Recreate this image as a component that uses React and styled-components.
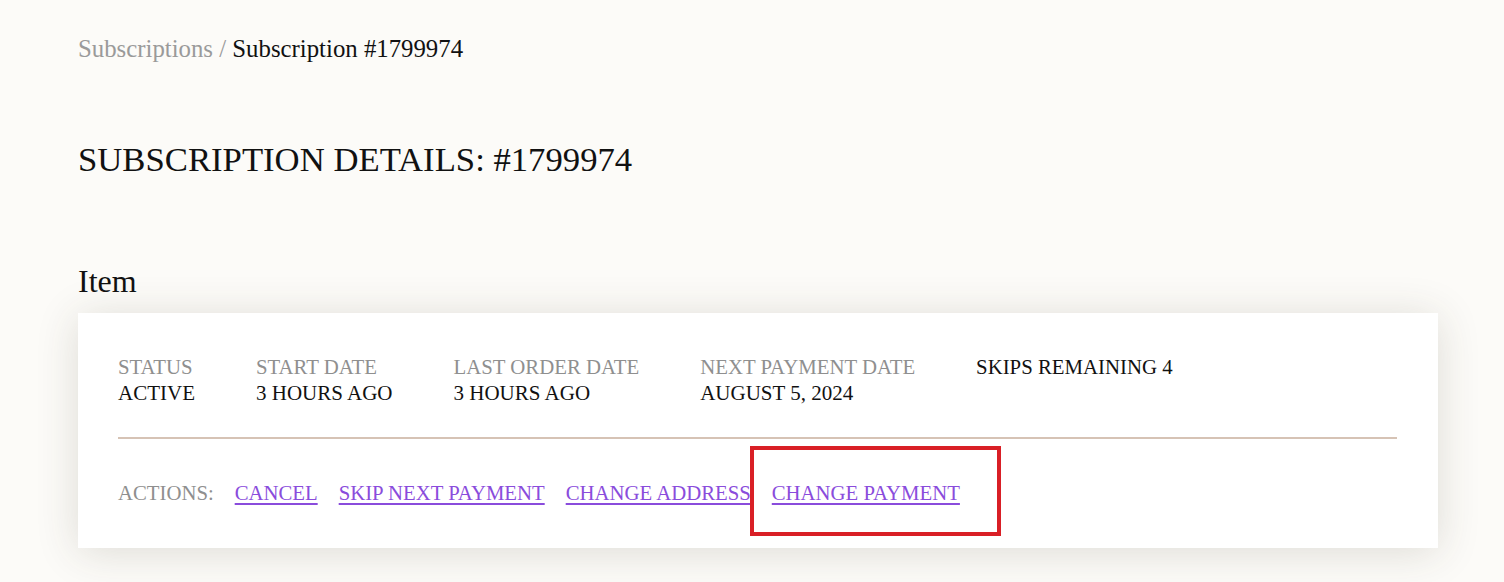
import React from "react";
import styled, { createGlobalStyle } from "styled-components";

const GlobalStyle = createGlobalStyle`
  html, body {
    margin: 0;
    padding: 0;
    background: #fcfbf8;
  }
  body {
    font-family: "Liberation Serif", "Times New Roman", serif;
    color: #111;
  }
`;

const Page = styled.div`
  padding: 34px 66px 40px 78px;
`;

const Breadcrumb = styled.nav`
  font-size: 24.8px;
  line-height: 30px;
  color: #111;
`;

const Crumb = styled.span`
  color: ${(p) => (p.$muted ? "#9a9a9a" : "#111")};
`;

const Title = styled.h1`
  margin: 74px 0 0;
  font-size: 34.7px;
  line-height: 44px;
  font-weight: normal;
  text-transform: uppercase;
`;

const SectionTitle = styled.h2`
  margin: 79px 0 12px;
  font-size: 32px;
  line-height: 40px;
  font-weight: normal;
`;

const Card = styled.section`
  background: #fff;
  padding: 40px 41px 41px 40px;
  box-shadow: 0 4px 40px rgba(60, 55, 40, 0.16);
`;

const Stats = styled.dl`
  display: flex;
  gap: 61px;
  margin: 0;
`;

const Stat = styled.div`
  display: flex;
  flex-direction: column;
`;

const Label = styled.dt`
  font-size: 20.8px;
  line-height: 27px;
  text-transform: uppercase;
  color: ${(p) => (p.$dark ? "#111" : "#8f8f8f")};
`;

const Value = styled.dd`
  margin: 0;
  font-size: 21px;
  line-height: 27px;
  text-transform: uppercase;
  color: #111;
`;

const Divider = styled.hr`
  border: 0;
  height: 2px;
  background: #d6c3b5;
  margin: 30px 0 41px;
`;

const Actions = styled.div`
  display: flex;
  align-items: baseline;
  gap: 21px;
  font-size: 20.75px;
  line-height: 27px;
  text-transform: uppercase;
`;

const ActionsLabel = styled.span`
  color: #8f8f8f;
`;

const ActionLink = styled.a`
  position: relative;
  color: #8a4cdc;
  text-decoration: underline;
  text-decoration-thickness: 2px;
  text-underline-offset: 3px;
  cursor: pointer;

  ${(p) =>
    p.$highlight &&
    `
    &::after {
      content: "";
      position: absolute;
      left: -22px;
      right: -41px;
      top: -34px;
      bottom: -29px;
      border: 4px solid #d91f26;
      pointer-events: none;
    }
  `}
`;

const stats = [
  { label: "Status", value: "Active" },
  { label: "Start date", value: "3 hours ago" },
  { label: "Last order date", value: "3 hours ago" },
  { label: "Next payment date", value: "August 5, 2024" },
];

const actions = ["Cancel", "Skip next payment", "Change address", "Change payment"];

export default function App() {
  return (
    <>
      <GlobalStyle />
      <Page>
        <Breadcrumb>
          <Crumb $muted>Subscriptions / </Crumb>
          <Crumb>Subscription #1799974</Crumb>
        </Breadcrumb>
        <Title>Subscription details: #1799974</Title>
        <SectionTitle>Item</SectionTitle>
        <Card>
          <Stats>
            {stats.map((s) => (
              <Stat key={s.label}>
                <Label>{s.label}</Label>
                <Value>{s.value}</Value>
              </Stat>
            ))}
            <Stat>
              <Label $dark>Skips remaining 4</Label>
            </Stat>
          </Stats>
          <Divider />
          <Actions>
            <ActionsLabel>Actions:</ActionsLabel>
            {actions.map((a) => (
              <ActionLink key={a} $highlight={a === "Change payment"}>
                {a}
              </ActionLink>
            ))}
          </Actions>
        </Card>
      </Page>
    </>
  );
}
